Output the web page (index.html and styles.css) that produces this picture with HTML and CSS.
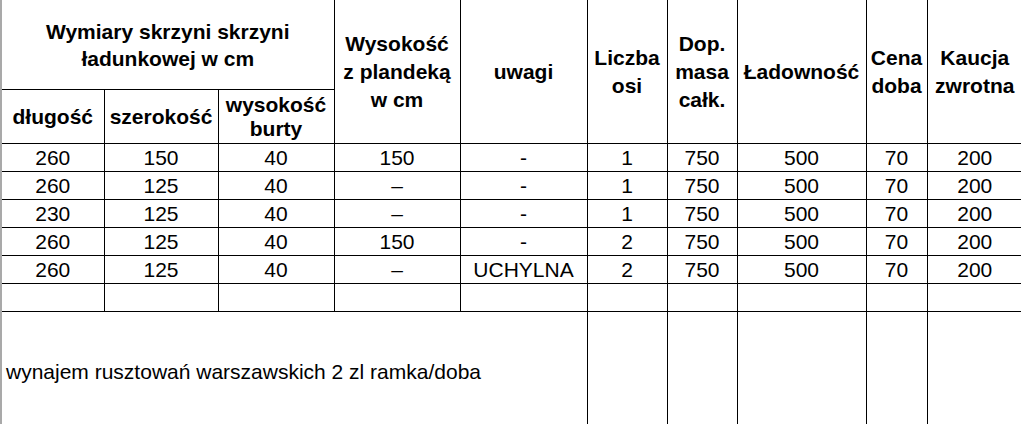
FILE: index.html
```html
<!DOCTYPE html>
<html lang="pl">
<head>
<meta charset="utf-8">
<title>Przyczepy</title>
<link rel="stylesheet" href="styles.css">
</head>
<body>
<table class="sheet">
  <colgroup>
    <col class="c1"><col class="c2"><col class="c3"><col class="c4"><col class="c5">
    <col class="c6"><col class="c7"><col class="c8"><col class="c9"><col class="c10">
  </colgroup>
  <thead>
    <tr class="h1">
      <th colspan="3" class="group">Wymiary skrzyni skrzyni<br>ładunkowej w cm</th>
      <th rowspan="2">Wysokość<br>z plandeką<br>w cm</th>
      <th rowspan="2">uwagi</th>
      <th rowspan="2">Liczba<br>osi</th>
      <th rowspan="2">Dop.<br>masa<br>całk.</th>
      <th rowspan="2">Ładowność</th>
      <th rowspan="2">Cena<br>doba</th>
      <th rowspan="2" class="last">Kaucja<br>zwrotna</th>
    </tr>
    <tr class="h2">
      <th class="first">długość</th>
      <th>szerokość</th>
      <th>wysokość<br>burty</th>
    </tr>
  </thead>
  <tbody>
    <tr class="row"><td class="first">260</td><td>150</td><td>40</td><td>150</td><td>-</td><td>1</td><td>750</td><td>500</td><td>70</td><td class="last">200</td></tr>
    <tr class="row"><td class="first">260</td><td>125</td><td>40</td><td>–</td><td>-</td><td>1</td><td>750</td><td>500</td><td>70</td><td class="last">200</td></tr>
    <tr class="row"><td class="first">230</td><td>125</td><td>40</td><td>–</td><td>-</td><td>1</td><td>750</td><td>500</td><td>70</td><td class="last">200</td></tr>
    <tr class="row"><td class="first">260</td><td>125</td><td>40</td><td>150</td><td>-</td><td>2</td><td>750</td><td>500</td><td>70</td><td class="last">200</td></tr>
    <tr class="row"><td class="first">260</td><td>125</td><td>40</td><td>–</td><td>UCHYLNA</td><td>2</td><td>750</td><td>500</td><td>70</td><td class="last">200</td></tr>
    <tr class="row"><td class="first"></td><td></td><td></td><td></td><td></td><td></td><td></td><td></td><td></td><td class="last"></td></tr>
    <tr class="big"><td colspan="5" class="first note">wynajem rusztowań warszawskich 2 zl ramka/doba</td><td></td><td></td><td></td><td></td><td class="last"></td></tr>
  </tbody>
</table>
</body>
</html>
```
FILE: styles.css
```css
html, body {
  margin: 0;
  padding: 0;
  background: #ffffff;
  overflow: hidden;
}

.sheet {
  border-collapse: collapse;
  table-layout: fixed;
  width: 1021px;
  font-family: "Liberation Sans", Arial, sans-serif;
  font-size: 21px;
  color: #000000;
  border-left: 2px solid #a9a9a9;
}

.c1 { width: 103px; }
.c2 { width: 114px; }
.c3 { width: 116px; }
.c4 { width: 126px; }
.c5 { width: 127px; }
.c6 { width: 80px; }
.c7 { width: 70px; }
.c8 { width: 129px; }
.c9 { width: 61px; }
.c10 { width: 95px; }

.sheet th,
.sheet td {
  border: 1px solid #000000;
  padding: 0 1px;
  text-align: center;
  vertical-align: middle;
  overflow: hidden;
  white-space: nowrap;
}

.sheet th {
  font-weight: bold;
  line-height: 28px;
  border-top: none;
}

.sheet .h2 th {
  border-top: 1px solid #000000;
}

.sheet .first {
  border-left: 2px solid #a9a9a9;
}

.sheet .last {
  border-right: none;
}

.h1 th.group {
  height: 89px;
  line-height: 27px;
}

.h2 th {
  height: 53px;
  line-height: 24px;
}

.row td {
  height: 26px;
  line-height: 26px;
  padding-top: 1px;
}

.big td {
  height: 119px;
  border-bottom: none;
}

.sheet td.note {
  text-align: left;
  padding-left: 4px;
  padding-top: 0;
}
```
